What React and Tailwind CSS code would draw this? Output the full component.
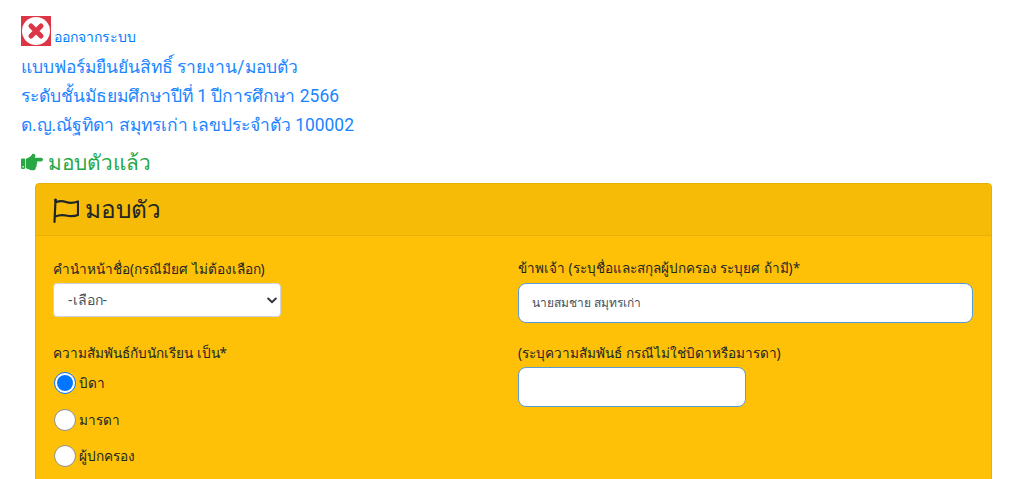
import { FaHandPointRight } from 'react-icons/fa'

// Logout tile: red square with a white disc and a red cross.
function LogoutIcon() {
  return (
    <svg width="30" height="30" viewBox="0 0 30 30" aria-hidden="true" className="shrink-0">
      <rect width="30" height="30" fill="#dc3545" />
      <circle cx="15" cy="15" r="14" fill="#fff" />
      <path d="M10 10 L20 20 M20 10 L10 20" stroke="#dc3545" strokeWidth="5" strokeLinecap="round" />
    </svg>
  )
}

function FlagIcon() {
  return (
    <svg width="26" height="26" viewBox="0 0 26 26" fill="none" aria-hidden="true" className="shrink-0">
      <path
        d="M2.500 3 L1.500 25 M2.500 5.500 C7 3.500 10 4 13 5 C17 6.500 21 6 25 4.500 L25 18 C20 20 17 19.500 13 18.500 C9 17.500 6 18 2 19.500"
        stroke="#212529"
        strokeWidth="2.200"
        strokeLinecap="round"
        strokeLinejoin="round"
      />
      <circle cx="2.500" cy="3" r="1.500" fill="#212529" />
    </svg>
  )
}

function SelectChevron() {
  return (
    <svg width="10" height="7" viewBox="0 0 10 7" fill="none" aria-hidden="true" className="shrink-0">
      <path d="M1.200 1.500 L5 5.200 L8.800 1.500" stroke="#343a40" strokeWidth="2" strokeLinecap="round" strokeLinejoin="round" />
    </svg>
  )
}

function Radio({ label, checked }) {
  return (
    <label className="flex items-center h-[36.500px] pl-px">
      {checked ? (
        <span className="w-[22px] h-[22px] rounded-full bg-white border border-[#0075ff] flex items-center justify-center shrink-0">
          <span className="w-[16px] h-[16px] rounded-full bg-[#0075ff]" />
        </span>
      ) : (
        <span className="w-[22px] h-[22px] rounded-full bg-white border border-[#8f8f8f] shrink-0" />
      )}
      <span className="ml-[3px]">{label}</span>
    </label>
  )
}

export default function App() {
  return (
    <div className="h-[479px] overflow-hidden bg-white text-[#212529] text-[13.600px] font-['Noto_Sans',sans-serif]">
      <div className="pt-4 pl-[21px]">
        <a className="flex items-end text-[#007bff] text-sm h-[30px]">
          <LogoutIcon />
          <span className="ml-[3px] leading-[20px] -mb-[1px]">ออกจากระบบ</span>
        </a>
        <div className="mt-[7px] text-[#1a85ff] text-[17.450px] leading-[29px] font-['Roboto','Noto_Sans',sans-serif]">
          <div>แบบฟอร์มยืนยันสิทธิ์ รายงาน/มอบตัว</div>
          <div>ระดับชั้นมัธยมศึกษาปีที่ 1 ปีการศึกษา 2566</div>
          <div>ด.ญ.ณัฐทิดา สมุทรเก่า เลขประจำตัว 100002</div>
        </div>
        <div className="mt-[7px] flex items-center text-[#28a745] text-[20.800px] leading-[30px]">
          <FaHandPointRight className="w-[22px] h-[22px] mr-[5px]" />
          <span>มอบตัวแล้ว</span>
        </div>
      </div>

      <div className="mt-[6px] ml-[35px] w-[957px] rounded-[4px] border border-[#e5b106] bg-[#ffc107] h-[400px]">
        <div className="h-[52px] flex items-center pl-[17px] bg-[#f6bb07] border-b border-[#e8b006] rounded-t-[3px] text-[24.400px]">
          <FlagIcon />
          <span className="ml-[6px]">มอบตัว</span>
        </div>
        <div className="grid grid-cols-2 pl-[17px] pr-[18px] pt-[20px]">
          <div>
            <div className="leading-[25px]">คำนำหน้าชื่อ(กรณีมียศ ไม่ต้องเลือก)</div>
            <div className="mt-[2px] w-[228px] h-[34px] bg-white border border-[#ced4da] rounded-[4px] flex items-center justify-between pl-[14px] pr-[3px] text-sm text-[#495057]">
              <span>-เลือก-</span>
              <SelectChevron />
            </div>
            <div className="mt-[23px] leading-[25px]">ความสัมพันธ์กับนักเรียน เป็น*</div>
            <div className="-mb-px">
              <Radio label="บิดา" checked />
              <Radio label="มารดา" />
              <Radio label="ผู้ปกครอง" />
            </div>
          </div>
          <div className="pl-[5px]">
            <div className="leading-[25px] text-[13.500px]">ข้าพเจ้า (ระบุชื่อและสกุลผู้ปกครอง ระบุยศ ถ้ามี)*</div>
            <div className="mt-[2px] w-[455px] h-[40px] bg-white border border-[#5a9bd5] rounded-[8px] flex items-center pl-[13px] text-xs text-[#495057]">
              นายสมชาย สมุทรเก่า
            </div>
            <div className="mt-[17px] leading-[25px]">(ระบุความสัมพันธ์ กรณีไม่ใช่บิดาหรือมารดา)</div>
            <div className="mt-[2px] w-[228px] h-[40px] bg-white border border-[#5a9bd5] rounded-[8px]" />
          </div>
        </div>
      </div>
    </div>
  )
}
